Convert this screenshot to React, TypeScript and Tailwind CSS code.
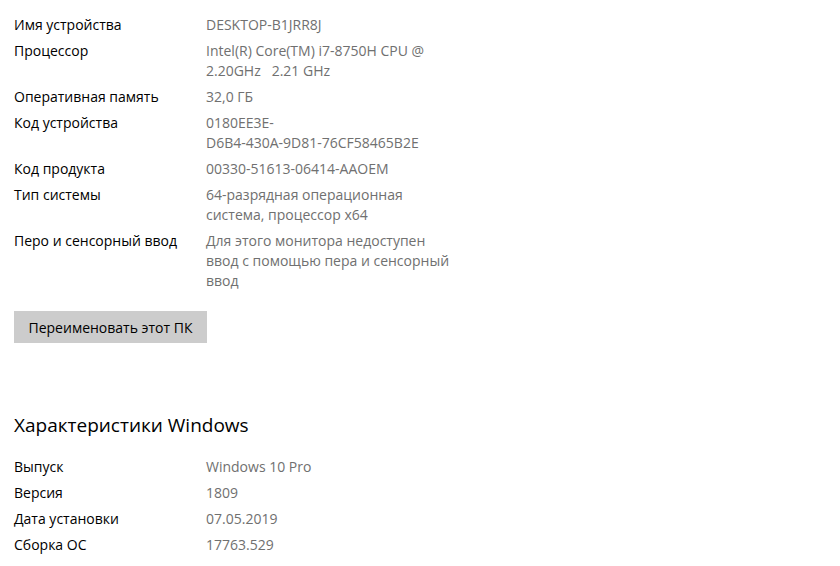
import React from 'react';

interface SpecRow {
  label: string;
  value: string;
}

const deviceSpecs: SpecRow[] = [
  { label: 'Имя устройства', value: 'DESKTOP-B1JRR8J' },
  { label: 'Процессор', value: 'Intel(R) Core(TM) i7-8750H CPU @ 2.20GHz   2.21 GHz' },
  { label: 'Оперативная память', value: '32,0 ГБ' },
  { label: 'Код устройства', value: '0180EE3E-\nD6B4-430A-9D81-76CF58465B2E' },
  { label: 'Код продукта', value: '00330-51613-06414-AAOEM' },
  { label: 'Тип системы', value: '64-разрядная операционная система, процессор x64' },
  { label: 'Перо и сенсорный ввод', value: 'Для этого монитора недоступен ввод с помощью пера и сенсорный ввод' },
];

const windowsSpecs: SpecRow[] = [
  { label: 'Выпуск', value: 'Windows 10 Pro' },
  { label: 'Версия', value: '1809' },
  { label: 'Дата установки', value: '07.05.2019' },
  { label: 'Сборка ОС', value: '17763.529' },
];

const SpecTable: React.FC<{ rows: SpecRow[] }> = ({ rows }) => (
  <div className="flex flex-col gap-[6px]">
    {rows.map((row) => (
      <div key={row.label} className="grid grid-cols-[192px_254px] text-[14px] leading-[20px]">
        <span className="text-black">{row.label}</span>
        <span className="text-[#707070] whitespace-pre-wrap">{row.value}</span>
      </div>
    ))}
  </div>
);

const App: React.FC = () => {
  return (
    <div
      className="w-[840px] h-[566px] bg-white px-[14px] pt-[15px] overflow-hidden"
      style={{ fontFamily: '"Open Sans", "Noto Sans", sans-serif' }}
    >
      <SpecTable rows={deviceSpecs} />

      <button className="mt-[20px] h-[32px] w-[193px] bg-[#cccccc] text-[14px] text-black">
        Переименовать этот ПК
      </button>

      <h2 className="mt-[68px] text-[19px] leading-[28px] text-black">Характеристики Windows</h2>

      <div className="mt-[18px]">
        <SpecTable rows={windowsSpecs} />
      </div>
    </div>
  );
};

export default App;
